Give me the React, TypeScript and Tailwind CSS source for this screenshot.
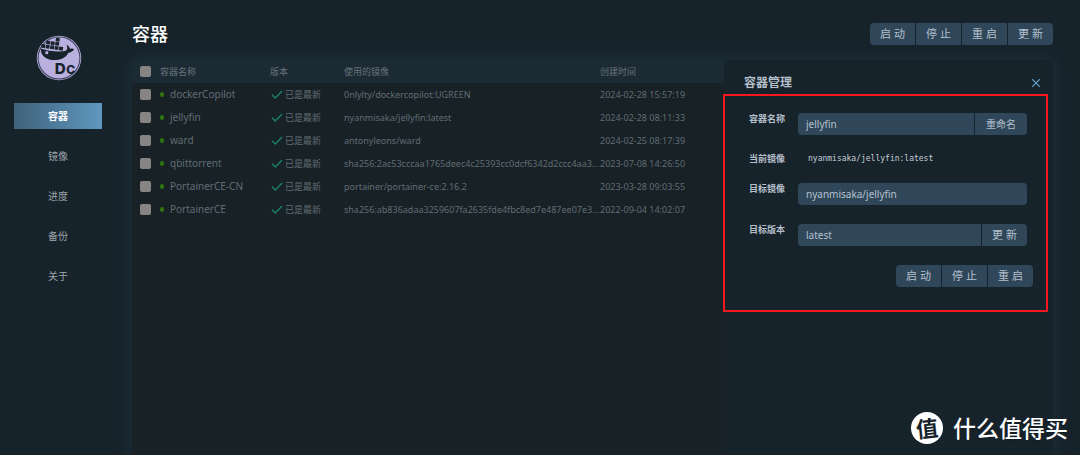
import { Check, X } from "lucide-react";

const menu = ["容器", "镜像", "进度", "备份", "关于"];

const containers = [
  { name: "dockerCopilot", image: "0nlylty/dockercopilot:UGREEN", created: "2024-02-28 15:57:19" },
  { name: "jellyfin", image: "nyanmisaka/jellyfin:latest", created: "2024-02-28 08:11:33" },
  { name: "ward", image: "antonyleons/ward", created: "2024-02-25 08:17:39" },
  {
    name: "qbittorrent",
    image: "sha256:2ac53cccaa1765deec4c25393cc0dcf6342d2ccc4aa3...",
    created: "2023-07-08 14:26:50",
  },
  { name: "PortainerCE-CN", image: "portainer/portainer-ce:2.16.2", created: "2023-03-28 09:03:55" },
  {
    name: "PortainerCE",
    image: "sha256:ab836adaa3259607fa2635fde4fbc8ed7e487ee07e3...",
    created: "2022-09-04 14:02:07",
  },
];

const checkboxClass =
  "block size-[11px] appearance-none rounded-xs bg-[#868583] checked:bg-[#5f97bd]";
const fieldClass = "h-[22px] min-w-0 flex-1 bg-[#30475a] px-2 text-[10px] text-[#b4c0cd] outline-none";
const labelClass = "w-[49px] shrink-0 text-[9px] leading-3 font-bold text-[#b4bfca]";

function Logo() {
  return (
    <svg viewBox="0 0 44 44" className="mx-auto size-[46px]" role="img" aria-label="DC">
      <circle cx="22" cy="22" r="21.3" fill="#b9b0df" />
      <circle cx="22" cy="22" r="20" fill="none" stroke="#3c3f5a" strokeWidth="1" />
      <g fill="#17232b">
        <path d="M4.5 12.8 C11 15 20 16.4 27.5 15.4 C30 15 30.4 12.5 29.2 9.2 C31 10.2 32.2 11.8 32.6 13.4 C34 12.700 35.500 12.900 36.400 13.800 C35.200 15.800 33 16.700 31 17 C29 21.400 24 24.200 17.500 24 C9.500 23.800 4.500 19.800 4.500 12.800Z" />
        <g transform="rotate(8 14 10)">
          <rect x="5.2" y="9.9" width="3.7" height="3.4" />
          <rect x="9.5" y="9.9" width="3.7" height="3.4" />
          <rect x="13.8" y="9.9" width="3.7" height="3.4" />
          <rect x="18.1" y="9.9" width="3.7" height="3.4" />
          <rect x="22.4" y="9.9" width="3.7" height="3.4" />
          <rect x="9.5" y="5.9" width="3.7" height="3.4" />
          <rect x="13.8" y="5.9" width="3.7" height="3.4" />
          <rect x="18.1" y="5.9" width="3.7" height="3.4" />
          <rect x="18.1" y="1.9" width="3.7" height="3.4" />
        </g>
      </g>
      <circle cx="10.3" cy="16.9" r="1.5" fill="#b9b0df" />
      <text x="18" y="37" fill="#17232b" fontFamily="Inter, sans-serif" fontWeight="800" fontSize="14.5">
        D
      </text>
      <text x="29" y="37" fill="#17232b" fontFamily="Inter, sans-serif" fontWeight="800" fontSize="11.5">
        C
      </text>
    </svg>
  );
}

function ButtonGroup({ labels }: { labels: string[] }) {
  return (
    <div className="flex gap-px overflow-hidden rounded">
      {labels.map((label) => (
        <button
          key={label}
          type="button"
          className="h-[22px] w-[45px] bg-[#30475a] text-[11px] text-[#b4c0cd] hover:bg-[#3a556b]"
        >
          {label}
        </button>
      ))}
    </div>
  );
}

function Sidebar() {
  return (
    <aside className="w-[117px] shrink-0 pt-[35px]">
      <Logo />
      <nav className="mt-[22px] flex flex-col gap-[14px] pr-[15px] pl-[14px]">
        {menu.map((item, i) => (
          <a
            key={item}
            href="#"
            className={
              i === 0
                ? "flex h-[26px] items-center justify-center bg-linear-to-r from-[#3f627b] to-[#5f98bf] text-[10px] font-bold text-white"
                : "flex h-[26px] items-center justify-center text-[10px] text-[#9ca3ab]"
            }
          >
            {item}
          </a>
        ))}
      </nav>
    </aside>
  );
}

function ContainerTable() {
  return (
    <table className="w-full table-fixed text-left text-[10px] text-[#626c74]">
      <colgroup>
        <col className="w-[28px]" />
        <col className="w-[110px]" />
        <col className="w-[74px]" />
        <col className="w-[256px]" />
        <col />
      </colgroup>
      <thead className="bg-[#1c2a33]">
        <tr className="h-[23px] text-[9px] text-[#67727b]">
          <th className="pl-2">
            <input type="checkbox" aria-label="全选" className={checkboxClass} />
          </th>
          <th className="font-normal">容器名称</th>
          <th className="font-normal">版本</th>
          <th className="font-normal">使用的镜像</th>
          <th className="font-normal">创建时间</th>
        </tr>
      </thead>
      <tbody>
        {containers.map((c) => (
          <tr key={c.name} className="h-[23px]">
            <td className="pl-2">
              <input type="checkbox" aria-label={c.name} className={checkboxClass} />
            </td>
            <td>
              <div className="flex items-center gap-1.5">
                <span className="h-[5px] w-1 rounded-full bg-[#2f7212]" />
                <span>{c.name}</span>
              </div>
            </td>
            <td>
              <div className="flex items-center gap-px text-[9px]">
                <Check className="size-[14px] text-[#1c8069]" strokeWidth={2.5} />
                已是最新
              </div>
            </td>
            <td className="text-[9px] whitespace-nowrap">{c.image}</td>
            <td className="text-[9px] whitespace-nowrap">{c.created}</td>
          </tr>
        ))}
      </tbody>
    </table>
  );
}

function ManagePanel() {
  return (
    <section className="absolute inset-y-0 right-0 w-[329px] rounded-t bg-[#17232b]">
      <div className="flex items-center justify-between pt-3.5 pr-2.5 pl-5">
        <h2 className="text-xs leading-[18px] font-bold text-[#b4bfca]">容器管理</h2>
        <button type="button" aria-label="关闭" className="text-[#5f98bf]">
          <X className="size-[14px]" strokeWidth={2} />
        </button>
      </div>

      <form className="pt-[21px] pr-[26px] pl-[25px]">
        <div className="flex">
          <label htmlFor="name" className={labelClass}>
            容器名称
          </label>
          <div className="flex flex-1 gap-px overflow-hidden rounded">
            <input id="name" defaultValue="jellyfin" className={fieldClass} />
            <button type="button" className="h-[22px] w-[52px] bg-[#30475a] text-[10px] text-[#b4c0cd]">
              重命名
            </button>
          </div>
        </div>
        <div className="mt-[18px] flex h-3 items-center">
          <span className={labelClass}>当前镜像</span>
          <code className="pl-2.5 font-['DejaVu_Sans_Mono',monospace] text-[8px] text-[#c4ced8]">
            nyanmisaka/jellyfin:latest
          </code>
        </div>
        <div className="mt-[18px] flex">
          <label htmlFor="image" className={labelClass}>
            目标镜像
          </label>
          <input id="image" defaultValue="nyanmisaka/jellyfin" className={`${fieldClass} rounded`} />
        </div>
        <div className="mt-[19px] flex">
          <label htmlFor="version" className={labelClass}>
            目标版本
          </label>
          <div className="flex flex-1 gap-px overflow-hidden rounded">
            <input id="version" defaultValue="latest" className={fieldClass} />
            <button type="button" className="h-[22px] w-[45px] bg-[#30475a] text-[11px] text-[#b4c0cd]">
              更 新
            </button>
          </div>
        </div>
      </form>

      <div className="mt-[19px] flex justify-end pr-5">
        <ButtonGroup labels={["启 动", "停 止", "重 启"]} />
      </div>

      {/* red frame round the form */}
      <div className="pointer-events-none absolute top-[34px] right-[5px] -left-px h-[218px] border-2 border-[#f5171f]" />
    </section>
  );
}

function Watermark() {
  return (
    <div className="pointer-events-none absolute right-3 bottom-[11px] flex items-center gap-2.5 text-white">
      <span className="flex size-8 items-center justify-center rounded-full bg-white text-[22px] font-bold text-[#17232b]">
        <span className="-rotate-6">值</span>
      </span>
      <span className="text-[23px] leading-8 font-medium text-shadow-sm">什么值得买</span>
    </div>
  );
}

export default function App() {
  return (
    <div className="relative flex min-h-screen overflow-hidden bg-[#17232b] font-['Noto_Sans','Noto_Sans_CJK_SC',sans-serif]">
      <Sidebar />
      <main className="flex min-w-0 flex-1 flex-col pr-[27px] pl-[15px]">
        <header className="flex items-center justify-between pt-[22px] pb-[14px]">
          <h1 className="text-lg leading-6 font-medium text-white">容器</h1>
          <ButtonGroup labels={["启 动", "停 止", "重 启", "更 新"]} />
        </header>
        <div className="relative flex-1 rounded-t bg-[#172126] shadow-[0_0_16px_#1e323f]">
          <ContainerTable />
          <ManagePanel />
        </div>
      </main>
      <Watermark />
    </div>
  );
}
